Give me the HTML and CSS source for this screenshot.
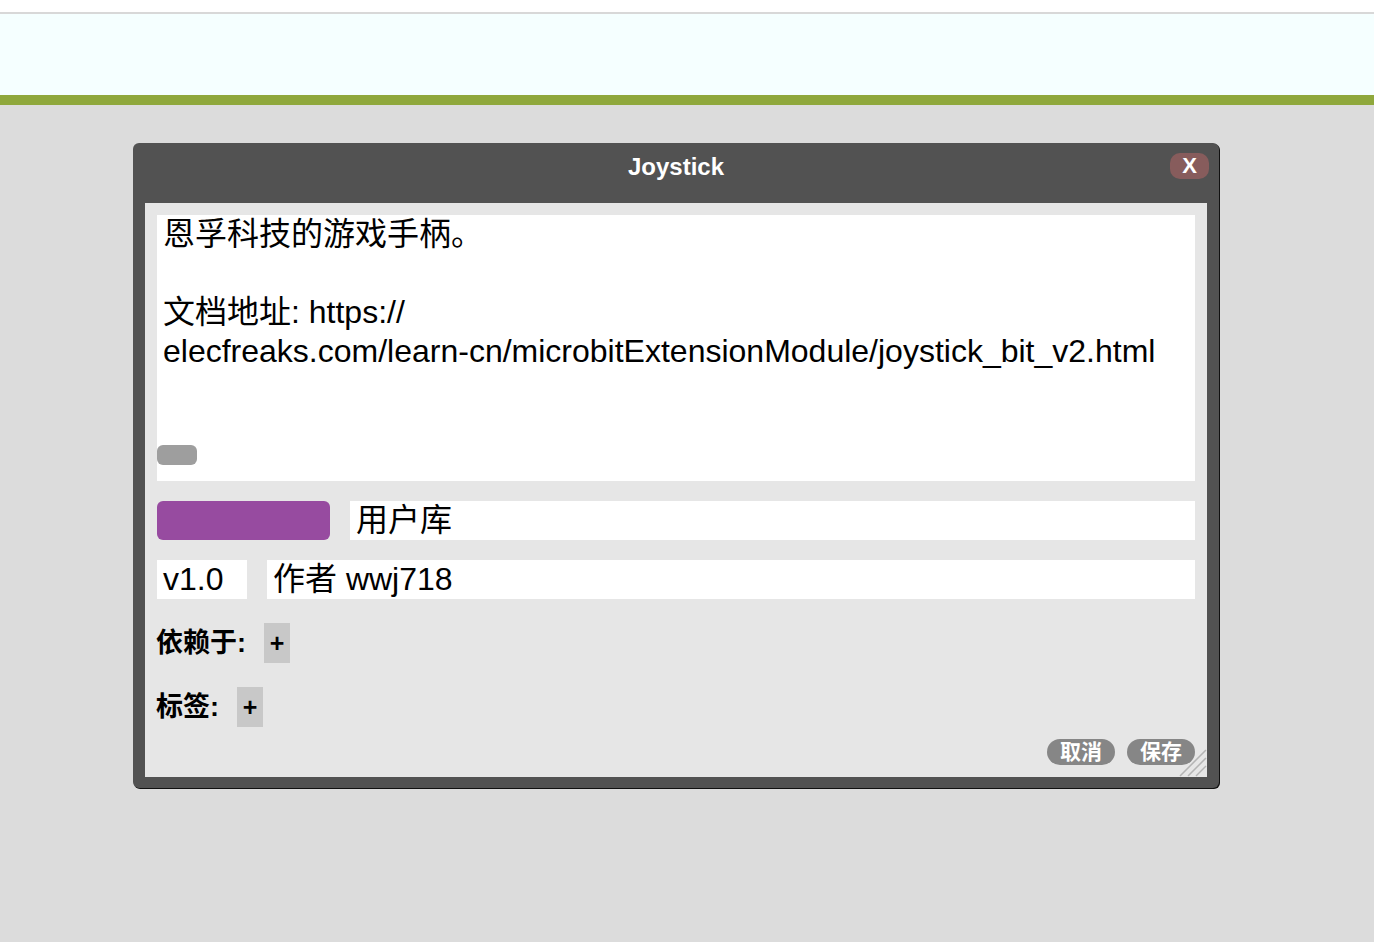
FILE: index.html
```html
<!DOCTYPE html>
<html lang="zh">
<head>
<meta charset="utf-8">
<title>Joystick</title>
<link rel="stylesheet" href="styles.css">
</head>
<body>
<div class="topwhite"></div>
<div class="topband"></div>
<div class="greenbar"></div>
<main class="stage">
  <section class="dialog">
    <header class="titlebar">
      <span class="title">Joystick</span>
      <button class="close">X</button>
    </header>
    <div class="body">
      <div class="desc">
        <div class="desc-text">恩孚科技的游戏手柄。<br><br>文档地址: https://<br>elecfreaks.com/learn-cn/microbitExtensionModule/joystick_bit_v2.html</div>
        <div class="pill"></div>
      </div>
      <div class="row">
        <div class="swatch"></div>
        <div class="field grow">用户库</div>
      </div>
      <div class="row">
        <div class="field version">v1.0</div>
        <div class="field grow">作者 wwj718</div>
      </div>
      <div class="labelrow">
        <span class="label">依赖于:</span>
        <button class="plus">+</button>
      </div>
      <div class="labelrow">
        <span class="label">标签:</span>
        <button class="plus">+</button>
      </div>
      <div class="actions">
        <button class="act">取消</button>
        <button class="act">保存</button>
      </div>
      <svg class="grip" width="28" height="28" viewBox="0 0 28 28">
        <line x1="27" y1="1" x2="1" y2="27" stroke="#b4b4b4" stroke-width="1.5"/>
        <line x1="27" y1="9" x2="9" y2="27" stroke="#b4b4b4" stroke-width="1.5"/>
        <line x1="27" y1="17" x2="17" y2="27" stroke="#b4b4b4" stroke-width="1.5"/>
      </svg>
    </div>
  </section>
</main>
</body>
</html>
```

FILE: styles.css
```css
* { box-sizing: border-box; }
html, body {
  margin: 0;
  padding: 0;
  background: #dcdcdc;
  font-family: "Liberation Sans", "Noto Sans CJK SC", sans-serif;
  color: #000;
  height: 100%;
  overflow: hidden;
}
.topwhite {
  height: 14px;
  background: #ffffff;
  border-bottom: 2px solid #d8d8d8;
}
.topband {
  height: 81px;
  background: #f5ffff;
}
.greenbar {
  height: 10px;
  background: #8fa83c;
}
.stage {
  padding: 38px 0 0 133px;
}
.dialog {
  width: 1086px;
  background: #525252;
  border-radius: 6px;
  box-shadow: 1px 1px 0 #111;
  padding: 0 12px 11px 12px;
}
.titlebar {
  height: 60px;
  position: relative;
  display: flex;
  align-items: center;
  justify-content: center;
}
.title {
  color: #fff;
  font-weight: bold;
  font-size: 24px;
  margin-top: -13px;
}
.close {
  position: absolute;
  right: -2px;
  top: 10px;
  width: 39px;
  height: 26px;
  border: none;
  border-radius: 10px;
  background: #875c5c;
  color: #fff;
  font-family: "Liberation Sans", sans-serif;
  font-weight: bold;
  font-size: 22px;
  line-height: 26px;
  padding: 0;
}
.body {
  background: #e6e6e6;
  padding: 12px;
  position: relative;
  display: flex;
  flex-direction: column;
}
.desc {
  background: #fff;
  height: 266px;
  position: relative;
}
.desc-text {
  font-size: 32px;
  line-height: 39px;
  padding-left: 6px;
}
.pill {
  position: absolute;
  left: 0;
  top: 230px;
  width: 40px;
  height: 20px;
  border-radius: 6px;
  background: #9e9e9e;
}
.row {
  display: flex;
  gap: 20px;
  margin-top: 20px;
  height: 39px;
}
.swatch {
  width: 173px;
  background: #974ba0;
  border-radius: 6px;
}
.field {
  background: #fff;
  font-size: 32px;
  line-height: 39px;
  padding-left: 6px;
  white-space: nowrap;
}
.grow { flex: 1; }
.version { width: 90px; }
.labelrow {
  display: flex;
  align-items: center;
  gap: 18px;
  margin-top: 24px;
  height: 40px;
}
.label {
  font-weight: bold;
  font-size: 27px;
  line-height: 40px;
  margin-left: -1px;
}
.plus {
  width: 26px;
  height: 40px;
  border: none;
  padding: 0;
  background: #c8c8c8;
  font-family: "Liberation Sans", sans-serif;
  font-weight: bold;
  font-size: 25px;
  color: #000;
}
.actions {
  display: flex;
  justify-content: flex-end;
  gap: 12px;
  margin-top: 12px;
}
.act {
  width: 68px;
  height: 26px;
  border: none;
  border-radius: 13px;
  background: #868686;
  color: #fff;
  font-family: "Noto Sans CJK SC", sans-serif;
  font-weight: bold;
  font-size: 21px;
  line-height: 22px;
  padding: 0 0 4px 0;
}
.grip {
  position: absolute;
  right: 0;
  bottom: 0;
}
```
